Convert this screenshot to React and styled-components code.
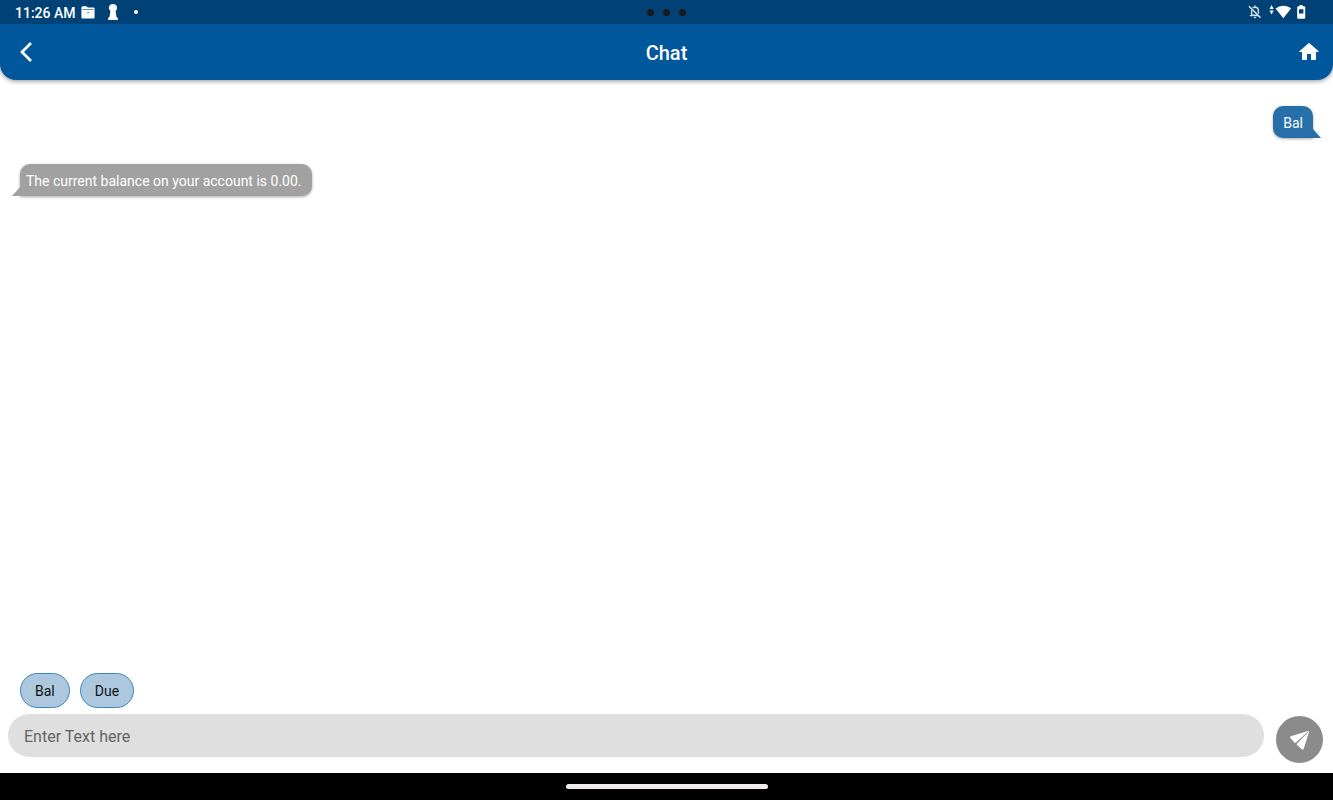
import React, { useState } from "react";
import styled, { createGlobalStyle } from "styled-components";

const GlobalStyle = createGlobalStyle`
  * { box-sizing: border-box; }
  body { margin: 0; background: #fff; font-family: Roboto, "Liberation Sans", sans-serif; }
`;

const Screen = styled.div`
  display: flex;
  flex-direction: column;
  min-height: 100vh;
`;

const Header = styled.header`
  overflow: hidden;
  background: #00579c;
  border-radius: 0 0 16px 16px;
  box-shadow: 0 1px 5px rgba(0, 0, 0, 0.45);
`;

const StatusBar = styled.div`
  display: grid;
  grid-template-columns: 1fr auto 1fr;
  align-items: center;
  height: 24px;
  padding: 0 27px 0 15px;
  background: #004276;
  color: #fff;
`;

const StatusGroup = styled.div`
  display: flex;
  align-items: center;
  justify-content: ${(p) => (p.$end ? "flex-end" : "flex-start")};
  gap: ${(p) => p.$gap}px;
`;

const Clock = styled.time`
  padding-top: 2px;
  font-size: 14px;
  line-height: 22px;
  font-weight: 500;
`;

const Notifications = styled(StatusGroup)`
  padding-left: 8px;
`;

const Dots = styled.div`
  display: flex;
  gap: 9px;
  padding-left: 12px;
`;

const Dot = styled.span`
  width: ${(p) => p.$size}px;
  height: ${(p) => p.$size}px;
  border-radius: 50%;
  background: ${(p) => p.$color};
`;

const AppBar = styled.div`
  display: grid;
  grid-template-columns: 1fr auto 1fr;
  align-items: center;
  height: 56px;
  padding: 0 13px;
`;

const Title = styled.h1`
  margin: 0;
  padding-top: 2px;
  color: #fff;
  font-size: 20px;
  line-height: 24px;
  font-weight: 500;
`;

const IconButton = styled.button`
  display: flex;
  justify-self: ${(p) => (p.$end ? "end" : "start")};
  padding: 0;
  border: 0;
  background: none;
  cursor: pointer;
`;

const Messages = styled.main`
  display: flex;
  flex: 1;
  flex-direction: column;
  gap: 26px;
  padding: 26px 20px;
`;

const Bubble = styled.p`
  position: relative;
  align-self: ${(p) => (p.$mine ? "flex-end" : "flex-start")};
  margin: 0;
  padding: ${(p) => (p.$mine ? "7px 10px 5px" : "7px 10px 5px 6px")};
  border-radius: ${(p) => (p.$mine ? "10px 10px 0 10px" : "10px 10px 10px 0")};
  background: ${(p) => (p.$mine ? "#266fa9" : "#a1a1a1")};
  box-shadow: 0 1px 3px rgba(0, 0, 0, 0.35);
  color: #fff;
  font-size: 14px;
  line-height: 20px;

  &::after {
    content: "";
    position: absolute;
    bottom: 0;
    ${(p) => (p.$mine ? "left: 100%" : "right: 100%")};
    width: 8px;
    height: 9px;
    background: inherit;
    clip-path: ${(p) =>
      p.$mine ? "polygon(0 0, 100% 100%, 0 100%)" : "polygon(100% 0, 100% 100%, 0 100%)"};
  }
`;

const Footer = styled.footer`
  padding: 0 10px 10px 8px;
`;

const Chips = styled.div`
  display: flex;
  gap: 10px;
  padding: 0 12px 6px;
`;

const Chip = styled.button`
  height: 35px;
  padding: 0 14px;
  border: 1px solid #3c86c0;
  border-radius: 18px;
  background: #adc8de;
  color: #111;
  font-family: inherit;
  font-size: 14px;
  line-height: 20px;
  cursor: pointer;
`;

const Composer = styled.form`
  display: flex;
  gap: 12px;
`;

const TextField = styled.input`
  flex: 1;
  min-width: 0;
  height: 43px;
  padding: 2px 16px 0;
  border: 0;
  border-radius: 22px;
  outline: 0;
  background: #dfdfdf;
  color: #222;
  font-family: inherit;
  font-size: 16px;

  &::placeholder { color: #636363; opacity: 1; }
`;

const SendButton = styled.button`
  display: flex;
  align-items: center;
  justify-content: center;
  width: 47px;
  height: 47px;
  margin-top: 2px;
  padding: 0;
  border: 0;
  border-radius: 50%;
  background: #8b8b8b;
  cursor: pointer;
`;

const NavigationBar = styled.div`
  display: flex;
  align-items: center;
  justify-content: center;
  height: 27px;
  background: #000;
`;

const HomeHandle = styled.div`
  width: 202px;
  height: 5px;
  border-radius: 3px;
  background: #eee9eb;
`;

const FolderIcon = () => (
  <svg width="14" height="13" viewBox="0 0 14 13" fill="#fff" aria-hidden="true">
    <path d="M2.2.2h3.300L6.900 1.500h5.200c.9 0 1.500.5 1.500 1.300v8.200c0 1-.6 1.600-1.500 1.600H1.900C1 12.600.4 12 .4 11V1.700C.4.8 1.200.2 2.200.2Z" />
    <path d="M1.500 3.200h11v.9h-11Z" fill="#3f6a94" />
    <path d="M5.700 6h2.800L7.100 7.700Z" fill="#7893b3" />
  </svg>
);

const PawnIcon = () => (
  <svg width="10" height="16" viewBox="0 0 10 16" fill="#fff" aria-hidden="true">
    <path d="M5 0c2.400 0 4.100 1.600 4.100 3.700 0 1.300-.6 2.300-1.500 3l.8 6c.9.600 1.500 1.400 1.500 2.300v1H.1v-1c0-.9.6-1.700 1.500-2.300l.8-6C1.500 6 .9 5 .9 3.700.9 1.600 2.600 0 5 0Z" />
  </svg>
);

const BellOffIcon = () => (
  <svg width="15" height="14" viewBox="0 0 15 14" fill="none" stroke="#d4e0eb" strokeWidth="1.400" aria-hidden="true">
    <path d="M1 1.200 12.600 12.800" strokeWidth="1.600" />
    <path d="M4.600 2.900C5.300 2.400 6 2.300 7 2.300c2.200 0 3.400 1.700 3.400 3.700v2.800M3.600 5.200v5H10M1.800 10.600h9M7 .6v1.700" />
    <path d="M5.800 12h2.400c0 .8-.5 1.300-1.200 1.300S5.800 12.800 5.800 12Z" fill="#d4e0eb" stroke="none" />
  </svg>
);

const SignalIcon = () => (
  <svg width="22" height="14" viewBox="0 0 22 14" fill="#fff" aria-hidden="true">
    <path d="M2.600 0 4.700 4H.5ZM2.600 9.400.5 5.400h4.200Z" />
    <path d="M14.300.800c2.900 0 5.600 1 7.700 2.700L14.300 13.200 6.600 3.500A12 12 0 0 1 14.300.800Z" />
  </svg>
);

const BatteryIcon = () => (
  <svg width="9" height="14" viewBox="0 0 9 14" aria-hidden="true">
    <path fill="#fff" d="M2.600 0h3v1.300h1.300c.8 0 1.300.5 1.300 1.300v9.800c0 .8-.5 1.300-1.300 1.300H1.500c-.8 0-1.300-.5-1.300-1.300V2.600c0-.8.500-1.300 1.300-1.300h1.100Z" />
    <path fill="#004276" d="M2 4.300h4.400v4.200H2Z" />
  </svg>
);

const BackIcon = () => (
  <svg width="24" height="24" viewBox="0 0 24 24" fill="none" stroke="#fff" strokeWidth="2.800" aria-hidden="true">
    <path d="M18 3 9 12l9 9" />
  </svg>
);

const HomeIcon = () => (
  <svg width="24" height="24" viewBox="-1 0 24 24" fill="#fff" aria-hidden="true">
    <path d="M10 19.500v-5.500h4v5.500c0 .3.200.5.500.5h4c.3 0 .5-.2.500-.5V12h2.300c.4 0 .6-.5.300-.8L12.500 3.300a.8.800 0 0 0-1 0L2.400 11.200c-.3.3-.1.800.3.800H5v7.500c0 .3.200.5.500.5h4c.3 0 .5-.2.500-.5Z" />
  </svg>
);

const SendIcon = () => (
  <svg width="20" height="20" viewBox="0 0 20 20" fill="#fff" aria-hidden="true">
    <path d="M19.200.500.900 6.300C.2 6.600 0 7.300.4 7.900l4 4.600c.3.400.9.500 1.300.2Z" />
    <path d="M19.500.700 13.600 19.100c-.2.700-1 .9-1.500.5L7 15c-.4-.4-.4-.9-.1-1.300Z" />
  </svg>
);

const messages = [
  { mine: true, text: "Bal" },
  { mine: false, text: "The current balance on your account is 0.00." },
];

export default function App() {
  const [draft, setDraft] = useState("");

  return (
    <>
      <GlobalStyle />
      <Screen>
        <Header>
          <StatusBar>
            <StatusGroup $gap={5}>
              <Clock>11:26 AM</Clock>
              <FolderIcon />
              <Notifications $gap={16}>
                <PawnIcon />
                <Dot $size={4} $color="#fff" />
              </Notifications>
            </StatusGroup>
            <Dots>
              <Dot $size={7} $color="#191919" />
              <Dot $size={7} $color="#191919" />
              <Dot $size={7} $color="#191919" />
            </Dots>
            <StatusGroup $end $gap={6}>
              <BellOffIcon />
              <SignalIcon />
              <BatteryIcon />
            </StatusGroup>
          </StatusBar>
          <AppBar>
            <IconButton type="button" aria-label="Back">
              <BackIcon />
            </IconButton>
            <Title>Chat</Title>
            <IconButton type="button" aria-label="Home" $end>
              <HomeIcon />
            </IconButton>
          </AppBar>
        </Header>
        <Messages>
          {messages.map((message) => (
            <Bubble key={message.text} $mine={message.mine}>
              {message.text}
            </Bubble>
          ))}
        </Messages>
        <Footer>
          <Chips>
            {["Bal", "Due"].map((label) => (
              <Chip key={label} type="button" onClick={() => setDraft(label)}>
                {label}
              </Chip>
            ))}
          </Chips>
          <Composer onSubmit={(event) => event.preventDefault()}>
            <TextField
              type="text"
              aria-label="Message"
              placeholder="Enter Text here"
              value={draft}
              onChange={(event) => setDraft(event.target.value)}
            />
            <SendButton type="submit" aria-label="Send">
              <SendIcon />
            </SendButton>
          </Composer>
        </Footer>
        <NavigationBar>
          <HomeHandle />
        </NavigationBar>
      </Screen>
    </>
  );
}
